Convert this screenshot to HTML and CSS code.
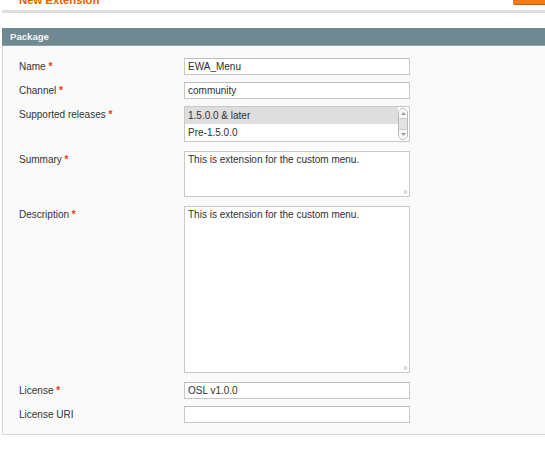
FILE: index.html
```html
<!DOCTYPE html>
<html>
<head>
<meta charset="utf-8">
<link rel="stylesheet" href="styles.css">
</head>
<body>
<div class="page">
  <div class="content-header">
    <h3 class="title">New Extension</h3>
    <button class="btn-save" type="button"></button>
  </div>
  <div class="fieldset-wrap">
    <div class="legend">Package</div>
    <div class="fieldset">
      <div class="row">
        <label class="label">Name <span class="req">*</span></label>
        <input class="field" type="text" value="EWA_Menu">
      </div>
      <div class="row">
        <label class="label">Channel <span class="req">*</span></label>
        <input class="field" type="text" value="community">
      </div>
      <div class="row row-select">
        <label class="label">Supported releases <span class="req">*</span></label>
        <div class="listbox">
          <div class="options">
            <div class="option selected">1.5.0.0 &amp; later</div>
            <div class="option">Pre-1.5.0.0</div>
          </div>
          <div class="scrollbar">
            <div class="sb-btn sb-up"><svg width="5" height="3" viewBox="0 0 5 3"><path d="M0 3L2.5 0L5 3z" fill="#a0a0a0"/></svg></div>
            <div class="sb-thumb"></div>
            <div class="sb-btn sb-down"><svg width="5" height="3" viewBox="0 0 5 3"><path d="M0 0L2.5 3L5 0z" fill="#a0a0a0"/></svg></div>
          </div>
        </div>
      </div>
      <div class="row row-summary">
        <label class="label">Summary <span class="req">*</span></label>
        <div class="area-wrap summary">
          <textarea class="area">This is extension for the custom menu.</textarea>
          <span class="grip"></span>
        </div>
      </div>
      <div class="row row-desc">
        <label class="label">Description <span class="req">*</span></label>
        <div class="area-wrap description">
          <textarea class="area">This is extension for the custom menu.</textarea>
          <span class="grip"></span>
        </div>
      </div>
      <div class="row">
        <label class="label">License <span class="req">*</span></label>
        <input class="field" type="text" value="OSL v1.0.0">
      </div>
      <div class="row row-last">
        <label class="label">License URI</label>
        <input class="field" type="text" value="">
      </div>
    </div>
  </div>
</div>
</body>
</html>
```

FILE: styles.css
```css
html, body {
  margin: 0;
  padding: 0;
  background: #ffffff;
  overflow: hidden;
  font-family: "Liberation Sans", Arial, sans-serif;
  color: #2f2f2f;
}

.page {
  width: 580px;
  padding-left: 2px;
}

.content-header {
  display: flex;
  justify-content: space-between;
  align-items: flex-start;
  margin-top: -7px;
  padding: 0 0 3px 17px;
  border-bottom: 3px solid #dfdfdf;
}

.title {
  margin: 0;
  font-size: 11.3px;
  line-height: 14px;
  font-weight: bold;
  color: #eb5e00;
}

.btn-save {
  width: 66px;
  height: 11.5px;
  margin-right: 3px;
  padding: 0;
  border: 0;
  border-bottom: 1px solid #c65c0b;
  background: #f27c1b;
  border-radius: 0 0 2px 2px;
}

.fieldset-wrap {
  margin-top: 15px;
}

.legend {
  height: 17px;
  line-height: 17px;
  background: #6f8992;
  border-bottom: 1px solid #8fa3aa;
  color: #f2f5f6;
  font-weight: bold;
  font-size: 9.6px;
  padding-left: 8px;
}

.fieldset {
  background: #fafafa;
  border: 1px solid #d6d6d6;
  border-top: 0;
  padding: 12px 0 11px 16px;
}

.row {
  display: flex;
  align-items: flex-start;
  margin-bottom: 7px;
}

.row-select,
.row-summary,
.row-desc {
  margin-bottom: 9px;
}

.row-last {
  margin-bottom: 0;
}

.label {
  width: 165px;
  flex: none;
  font-size: 10px;
  line-height: 17px;
  color: #333333;
}

.req {
  color: #eb340a;
  font-weight: bold;
}

.field {
  box-sizing: border-box;
  width: 226px;
  height: 17px;
  margin: 0;
  padding: 0 3px;
  border: 1px solid #c8c8c8;
  border-top-color: #bdbdbd;
  background: #ffffff;
  font-family: "Liberation Sans", Arial, sans-serif;
  font-size: 10px;
  color: #2f2f2f;
  outline: none;
}

.listbox {
  box-sizing: border-box;
  width: 226px;
  height: 36px;
  border: 1px solid #c8c8c8;
  background: #ffffff;
  display: flex;
}

.options {
  flex: 1;
}

.option {
  height: 17px;
  line-height: 17px;
  padding-left: 3px;
  font-size: 10px;
  color: #2f2f2f;
}

.option.selected {
  background: #dedede;
}

.scrollbar {
  width: 10px;
  margin: 1px 1px 1px 0;
  display: flex;
  flex-direction: column;
  border: 1px solid #b8b8b8;
  border-radius: 5px;
  background: #f4f4f4;
  box-sizing: border-box;
  overflow: hidden;
}

.sb-btn {
  height: 9px;
  display: flex;
  align-items: center;
  justify-content: center;
  background: #f7f7f7;
}

.sb-thumb {
  flex: 1;
  background: #e4e4e4;
  border-top: 1px solid #c4c4c4;
  border-bottom: 1px solid #c4c4c4;
  border-radius: 3px;
}

.area-wrap {
  position: relative;
  width: 226px;
}

.area-wrap.summary {
  height: 46px;
}

.area-wrap.description {
  height: 167px;
}

.area {
  box-sizing: border-box;
  display: block;
  width: 100%;
  height: 100%;
  margin: 0;
  padding: 2px 3px;
  border: 1px solid #c8c8c8;
  background: #ffffff;
  font-family: "Liberation Sans", Arial, sans-serif;
  font-size: 10px;
  line-height: 12px;
  color: #2f2f2f;
  resize: none;
  outline: none;
  overflow: hidden;
}

.grip {
  position: absolute;
  right: 3px;
  bottom: 3px;
  width: 3px;
  height: 4px;
  background-image: radial-gradient(circle, #b0b0b0 0.6px, transparent 0.8px);
  background-size: 2px 2px;
}
```
